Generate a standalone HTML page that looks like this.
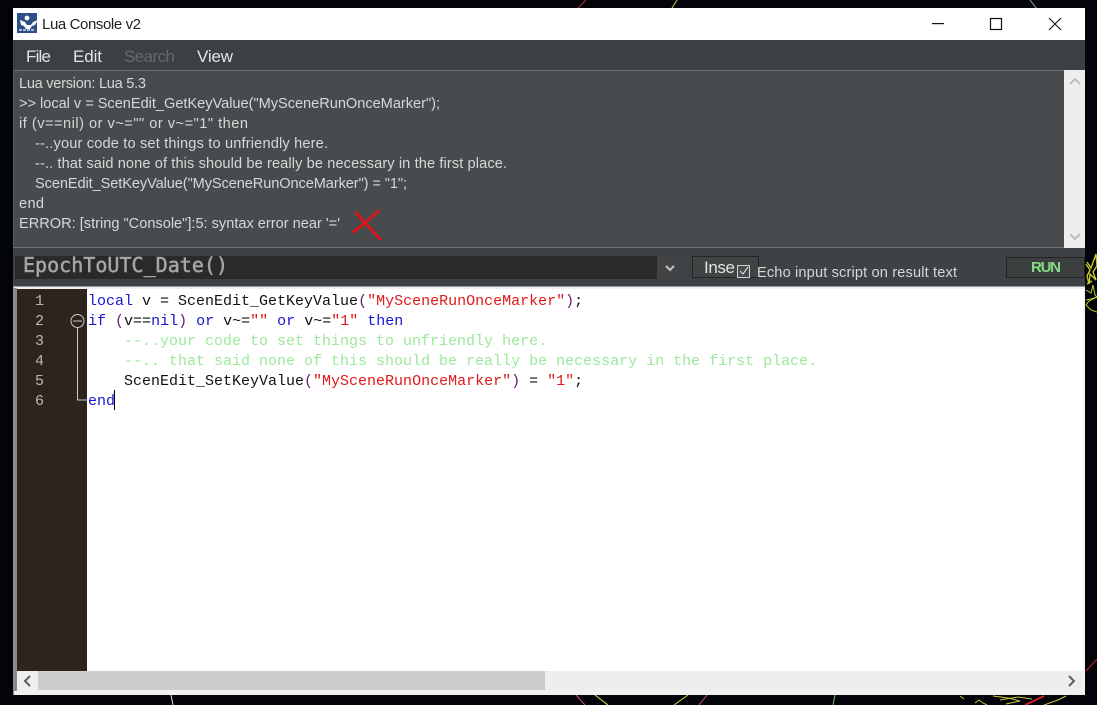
<!DOCTYPE html>
<html><head><meta charset="utf-8"><style>
html,body{margin:0;padding:0;background:#02040a;width:1097px;height:705px;overflow:hidden}
svg{display:block}
.u{font-family:"Liberation Sans",sans-serif;font-size:14.6px;fill:#d6d8d8}
.m{font-family:"Liberation Sans",sans-serif;font-size:17px;fill:#e2e4e4}
.c{font-family:"Liberation Mono",monospace;font-size:15px;white-space:pre;fill:#111}
.k{fill:#1616d0}.s{fill:#e01818}.p{fill:#6a1a70}.g{fill:#9ce89c}
.n{font-family:"Liberation Mono",monospace;font-size:15px;fill:#b8b8b4}
</style></head><body>
<svg width="1097" height="705" viewBox="0 0 1097 705" xmlns="http://www.w3.org/2000/svg" xml:space="preserve">
<rect width="1097" height="705" fill="#02040a"/>
<g fill="none" stroke-width="1">
<path d="M1030 0L1037 9" stroke="#8fb38f"/>
<path d="M672 8L677 0" stroke="#b8d060"/>
<path d="M578 8L586 0" stroke="#c03030"/>
<path d="M576 695L585 705" stroke="#c85080"/>
<path d="M595 695L608 705" stroke="#e8e840"/>
<path d="M688 695L674 705" stroke="#d8d840"/>
<path d="M707 695L699 705" stroke="#c85080"/>
<path d="M835 695L833 705" stroke="#80c080"/>
<path d="M171 695L173 705" stroke="#e0e0e0"/>
<path d="M1086 671L1097 659" stroke="#d02020"/>
<path d="M1025 705L1044 696" stroke="#d02020" stroke-width="2"/>
<path d="M960 696l4 3M975 703l4-3 4 3 4 2M993 696l15 2 12 3-14 3M1000 700l18-3 14 2M1044 705l14-5 8-4" stroke="#c8c83c"/>
<path d="M1087 262l4 6 5-14 1 12-4 6 3 8-6-6-1 10-2-8 3-6-4-6M1087 284l5-3" stroke="#c8c82c" stroke-width="1.4"/>
<path d="M1086 290l5 3 2-8 2 10 2 2-6 2-5 1" stroke="#c8c82c"/>
<path d="M1097 297l-8 4-3 4 5 5 6 2" stroke="#c8c82c"/>
</g>
<!-- window frame -->
<rect x="13" y="8" width="1072" height="687" fill="#3f4244"/>
<rect x="13" y="8" width="1072" height="32" fill="#fff"/>
<!-- logo -->
<rect x="17" y="13" width="20" height="20" fill="#2c4f86"/>
<path d="M20 20l5 2 2 3h4l2-3 5-2-3 5-3 1-2 3h-4l-2-3-3-1z" fill="#fff"/>
<circle cx="27" cy="18" r="2.4" fill="#fff"/>
<path d="M19 30h16" stroke="#d8e0f0" stroke-width="1.6" stroke-dasharray="3 1"/>
<text x="42" y="29" font-family="Liberation Sans,sans-serif" font-size="15" fill="#222" textLength="99">Lua Console v2</text>
<!-- window buttons -->
<rect x="932" y="23" width="12" height="1.2" fill="#111"/>
<rect x="990.5" y="18.5" width="11" height="11" fill="none" stroke="#111" stroke-width="1.2"/>
<path d="M1049 18l12 12M1061 18l-12 12" stroke="#111" stroke-width="1.1"/>
<!-- menu -->
<rect x="13" y="40" width="1072" height="30" fill="#3d4042"/>
<text class="m" x="26" y="62" textLength="25">File</text>
<text class="m" x="73" y="62" textLength="29">Edit</text>
<text class="m" x="124" y="62" textLength="51" style="fill:#666a6c">Search</text>
<text class="m" x="197" y="62" textLength="36">View</text>
<!-- console -->
<rect x="13" y="70" width="1051" height="178" fill="#484b4d"/>
<rect x="13" y="70" width="1051" height="1" fill="#6d7071"/>
<rect x="13" y="70" width="1" height="178" fill="#5f6263"/>
<rect x="13" y="247" width="1051" height="1" fill="#6d7071"/>
<rect x="1064" y="70" width="21" height="178" fill="#eeeeee"/>
<path d="M1070 84l5-5 5 5" fill="none" stroke="#bcbcbc" stroke-width="2"/>
<path d="M1070 234l5 5 5-5" fill="none" stroke="#bcbcbc" stroke-width="2"/>
<text class="u" x="19" y="88" textLength="127">Lua version: Lua 5.3</text>
<text class="u" x="19" y="108" textLength="421">&gt;&gt; local v = ScenEdit_GetKeyValue("MySceneRunOnceMarker");</text>
<text class="u" x="19" y="128" textLength="229">if (v==nil) or v~="" or v~="1" then</text>
<text class="u" x="35" y="148" textLength="293">--..your code to set things to unfriendly here.</text>
<text class="u" x="35" y="168" textLength="472">--.. that said none of this should be really be necessary in the first place.</text>
<text class="u" x="35" y="188" textLength="372">ScenEdit_SetKeyValue("MySceneRunOnceMarker") = "1";</text>
<text class="u" x="19" y="208" textLength="25">end</text>
<text class="u" x="19" y="228" textLength="321">ERROR:  [string "Console"]:5: syntax error near '='</text>
<path d="M356 213Q368 226 380 239M378 211Q366 223 353 232" fill="none" stroke="#d8141c" stroke-width="3" stroke-linecap="round"/>
<!-- toolbar -->
<rect x="13" y="248" width="1072" height="40" fill="#3f4244"/>
<rect x="15" y="256" width="642" height="23" fill="#2a2a2a"/>
<rect x="657" y="256" width="25" height="23" fill="#414344"/>
<path d="M666 266l4 4 4-4" fill="none" stroke="#c4c4c4" stroke-width="2"/>
<text x="23" y="272" font-family="DejaVu Sans Mono,monospace" font-size="20" fill="#a4a6a6" stroke="#a4a6a6" stroke-width="0.5" textLength="205">EpochToUTC_Date()</text>
<rect x="692.500" y="256.500" width="66" height="21" fill="#414445" stroke="#242424"/>
<text x="704" y="273" font-family="Liberation Sans,sans-serif" font-size="17" fill="#e2e4e4" textLength="31">Inse</text>
<rect x="737.500" y="265.500" width="12" height="12" fill="#4a4d4f" stroke="#d4d4d4"/>
<path d="M740 271l3 3 5-7" fill="none" stroke="#d8d8d8" stroke-width="1.2"/>
<text class="u" x="757" y="277" textLength="200">Echo input script on result text</text>
<rect x="1006.500" y="257.500" width="78" height="20" fill="#3c3f40" stroke="#242424"/>
<text x="1031" y="272" font-family="Liberation Sans,sans-serif" font-weight="bold" font-size="15" fill="#84dc84" textLength="30">RUN</text>
<rect x="13" y="286" width="1072" height="1" fill="#9a9c9d"/>
<!-- editor -->
<rect x="13" y="287" width="1072" height="408" fill="#f0f0f0"/>
<rect x="13" y="287" width="1" height="408" fill="#8e8e8e"/>
<rect x="14" y="288" width="3" height="403" fill="#8a8a8a"/>
<rect x="17" y="289" width="1066" height="382" fill="#fff"/>
<rect x="17" y="289" width="70" height="382" fill="#2e241e"/>
<g class="n">
<text class="n" x="35" y="305">1</text><text class="n" x="35" y="325">2</text><text class="n" x="35" y="345">3</text><text class="n" x="35" y="365">4</text><text class="n" x="35" y="385">5</text><text class="n" x="35" y="405">6</text>
</g>
<circle cx="77.500" cy="321" r="6.500" fill="#2e241e" stroke="#c8c8c4"/>
<path d="M73 321h9M77.500 328V400H87" fill="none" stroke="#c8c8c4"/>
<text class="c" x="88" y="305"><tspan class="k">local</tspan> v = ScenEdit_GetKeyValue<tspan class="p">(</tspan><tspan class="s">"MySceneRunOnceMarker"</tspan><tspan class="p">)</tspan>;</text>
<text class="c" x="88" y="325"><tspan class="k">if</tspan> <tspan class="p">(</tspan>v==<tspan class="k">nil</tspan><tspan class="p">)</tspan> <tspan class="k">or</tspan> v~=<tspan class="s">""</tspan> <tspan class="k">or</tspan> v~=<tspan class="s">"1"</tspan> <tspan class="k">then</tspan></text>
<text class="c g" x="124" y="345">--..your code to set things to unfriendly here.</text>
<text class="c g" x="124" y="365">--.. that said none of this should be really be necessary in the first place.</text>
<text class="c" x="124" y="385">ScenEdit_SetKeyValue<tspan class="p">(</tspan><tspan class="s">"MySceneRunOnceMarker"</tspan><tspan class="p">)</tspan> = <tspan class="s">"1"</tspan>;</text>
<text class="c k" x="88" y="405">end</text>
<rect x="114" y="390" width="1" height="20" fill="#000"/>
<!-- h scrollbar -->
<rect x="17" y="671" width="1066" height="19" fill="#eeeeee"/>
<rect x="38" y="671" width="507" height="19" fill="#cdcdcd"/>
<path d="M30 676l-5 5 5 5" fill="none" stroke="#606060" stroke-width="2"/>
<path d="M1069 676l5 5-5 5" fill="none" stroke="#606060" stroke-width="2"/>
<rect x="1083" y="287" width="2" height="408" fill="#f4f4f4"/>
</svg>
</body></html>
